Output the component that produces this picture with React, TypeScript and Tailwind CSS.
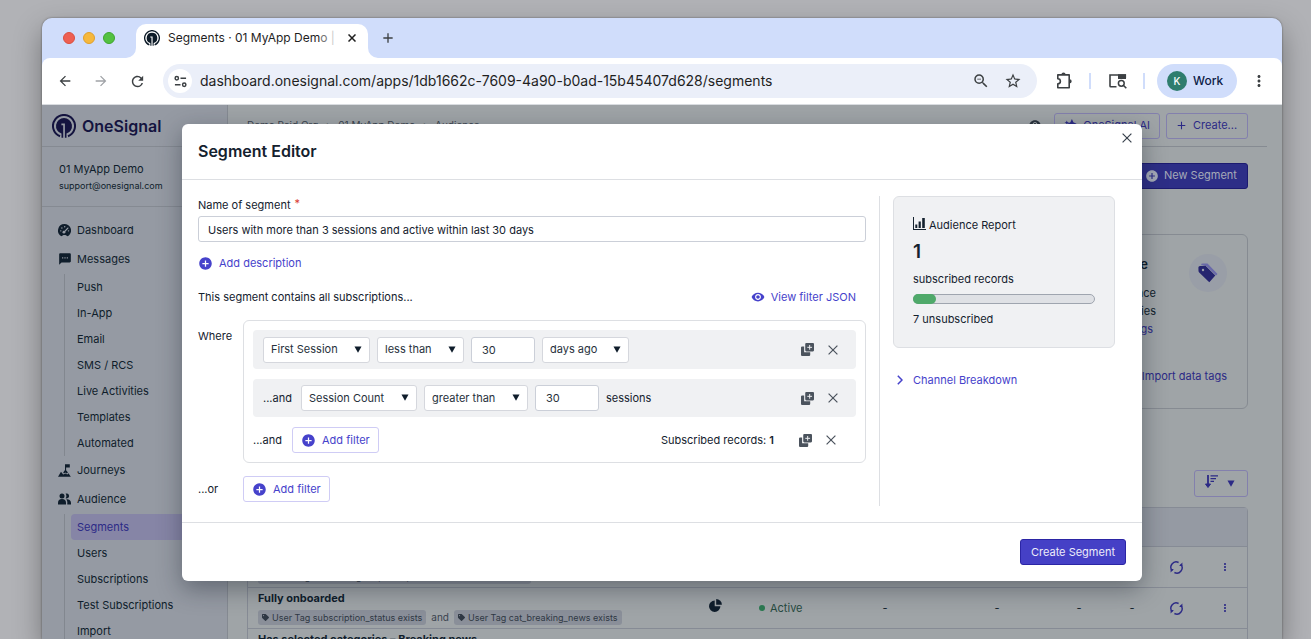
import type { ReactNode } from "react";
import {
  MdAddCircle,
  MdArrowBack,
  MdArrowForward,
  MdMoreVert,
  MdRefresh,
  MdRemoveRedEye,
  MdSms,
  MdStarBorder,
  MdZoomOut,
  MdHelp,
  MdAdd,
} from "react-icons/md";
import { FaTag } from "react-icons/fa";

function Logo({ className }: { className?: string }) {
  return (
    <svg viewBox="0 0 24 24" className={className} fill="none" aria-hidden="true">
      <path d="M8 22.200A11 11 0 1 1 16 22.200" stroke="currentColor" strokeWidth="2" />
      <path
        d="M12 4a8 8 0 0 1 2.500 15.600V23.800H12.900V9.600H9.400v1.700h1.800V23.800H9.500V19.600A8 8 0 0 1 12 4Z"
        fill="currentColor"
      />
    </svg>
  );
}

function Caret({ className }: { className?: string }) {
  return (
    <svg viewBox="0 0 8 7" className={className} fill="currentColor" aria-hidden="true">
      <path d="M.5.5h7L4 6.8z" />
    </svg>
  );
}

function CopyIcon() {
  return (
    <svg viewBox="0 0 12 12" className="size-[13px]" aria-hidden="true">
      <path d="M0 4.2A1 1 0 0 1 1 3.2h1.9v5.4h5.6v2.4a1 1 0 0 1-1 1H1a1 1 0 0 1-1-1z" fill="#4b535d" />
      <rect x="3.9" y="0" width="8.1" height="7.8" rx="1" fill="#4b535d" />
      <path d="M8 1.8v4.4M5.8 4h4.400" stroke="#f0f1f3" strokeWidth="0.9" />
    </svg>
  );
}

function Cross({ className, weight = 1.2 }: { className?: string; weight?: number }) {
  return (
    <svg viewBox="0 0 10 10" className={className} fill="none" stroke="currentColor" strokeWidth={weight} aria-hidden="true">
      <path d="M.6.6l8.800 8.800M9.400.6L.6 9.400" />
    </svg>
  );
}

function GaugeIcon() {
  return (
    <svg viewBox="0 0 14 14" className="size-[13px]" aria-hidden="true">
      <path d="M7 0a7 7 0 0 1 5.6 11.2c-.8 1-1.6 1.600-2.600 2.100-.8-1-1.800-1.500-3-1.500s-2.200.5-3 1.500A7 7 0 0 1 7 0Z" fill="currentColor" />
      <path d="M6.600 8.700l4-4.300" stroke="#969ba4" strokeWidth="1.400" strokeLinecap="round" />
      <circle cx="6.400" cy="8.800" r="1.500" fill="#969ba4" />
      <circle cx="3" cy="7.400" r=".8" fill="#969ba4" />
      <circle cx="4.200" cy="4.300" r=".8" fill="#969ba4" />
      <circle cx="7.200" cy="3" r=".8" fill="#969ba4" />
      <circle cx="11.300" cy="7.400" r=".8" fill="#969ba4" />
    </svg>
  );
}

function JourneyIcon() {
  return (
    <svg viewBox="0 0 13 13" className="size-[13px]" fill="currentColor" aria-hidden="true">
      <path d="M7 .3h4.800v3.300H8.100v2.600L10 8.500l-1.500 1L7.300 8.400 6 9.400l-.8-.8L7 6z" />
      <path d="M3 7.800l2.200 2.800 2.300-1.200 1.800 1.200L10.500 9.200l2.300 3.500H0z" />
    </svg>
  );
}

function PeopleIcon() {
  return (
    <svg viewBox="0 0 13 12" className="h-3 w-[13px]" fill="currentColor" aria-hidden="true">
      <circle cx="4" cy="2.900" r="2.500" />
      <path d="M7.600.6a2.500 2.500 0 1 1 0 4.600 4 4 0 0 0 0-4.600z" />
      <path d="M0 11.500V10a4 4 0 0 1 8 0v1.500z" />
      <path d="M8.300 6.300A3.800 3.800 0 0 1 13 10v1.500H9.300V10a5 5 0 0 0-1-3.700z" />
    </svg>
  );
}

function PieIcon() {
  return (
    <svg viewBox="0 0 13 13" className="size-[13px]" fill="currentColor" aria-hidden="true">
      <path d="M5.700 1.600v5.700h5.700A5.700 5.700 0 1 1 5.700 1.600z" />
      <path d="M7.200.1a5.700 5.700 0 0 1 5.700 5.700H7.200z" />
    </svg>
  );
}

function ReportIcon() {
  return (
    <svg viewBox="0 0 13 13" className="size-[13px]" fill="currentColor" aria-hidden="true">
      <path d="M0 0h1v12h12v1H0z" />
      <path d="M2.300 7.500h2v3.500h-2zM5.600 4.500h2.200V11H5.600zM9.200 1h2.600v10H9.200z" />
    </svg>
  );
}

function SyncIcon() {
  return (
    <svg viewBox="0 0 13 13" className="size-[13px]" fill="none" stroke="currentColor" strokeWidth="1.400" aria-hidden="true">
      <path d="M2.300 9.800A5.300 5.300 0 0 1 8.600 1.500" />
      <path d="M10.700 3.200A5.300 5.300 0 0 1 4.400 11.500" />
      <path d="M12.400 1.600v3.300H9.100zM.6 11.400V8.100h3.300z" fill="currentColor" stroke="none" />
    </svg>
  );
}

function SortIcon() {
  return (
    <svg viewBox="0 0 13 13" className="size-[13px]" fill="none" stroke="currentColor" aria-hidden="true">
      <path d="M3 0v11" strokeWidth="1.800" />
      <path d="M.5 9L3 12.500 5.500 9z" fill="currentColor" />
      <path d="M5.500.8H13M5.500 3.600h5.500M5.500 6.400h3.500" strokeWidth="1.300" />
    </svg>
  );
}

function TagsIcon() {
  return (
    <svg viewBox="0 0 20 20" className="size-5" aria-hidden="true">
      <path d="M3 1.800Q3.200.4 5 .5l4.500.1 10 10.400-1.500 1.600L8.500 2.900z" fill="#6a69a9" />
      <path d="M.4 4.500Q.4 3 2 2.900l5.500-.2 9.800 9.800-6 6.800L1.200 9.500Q.5 8.800.5 8z" fill="#25246f" />
      <circle cx="5" cy="7" r="1.200" fill="#9a9fa8" />
    </svg>
  );
}

function TuneIcon() {
  return (
    <svg viewBox="0 0 14 14" className="size-[13px]" fill="none" stroke="currentColor" strokeWidth="1.600" aria-hidden="true">
      <circle cx="3" cy="3.500" r="1.800" />
      <path d="M7 3.500h6M1 10.500h6" />
      <circle cx="11" cy="10.500" r="1.800" />
    </svg>
  );
}

function PuzzleIcon() {
  return (
    <svg viewBox="0 0 18 18" className="size-[18px]" aria-hidden="true">
      <path
        d="M2.800 2.900h11.400v12.900H2.800v-3.900a2.600 2.600 0 0 0 0-5.200z"
        fill="none"
        stroke="currentColor"
        strokeWidth="1.600"
        strokeLinejoin="round"
      />
      <path d="M6.400 2.600a2.100 2.100 0 0 1 4.200 0zM14.600 7.200a2.100 2.100 0 0 1 0 4.200z" fill="currentColor" />
    </svg>
  );
}

function TabSearchIcon() {
  return (
    <svg viewBox="0 0 18 16" className="h-4 w-[18px]" fill="none" stroke="currentColor" aria-hidden="true">
      <path d="M7.500 13.700H1.800a.8.800 0 0 1-.8-.8V2h15.300v3" strokeWidth="1.600" />
      <path d="M9 1.300h8V6H9z" fill="currentColor" stroke="none" />
      <circle cx="12.300" cy="10.300" r="2.900" strokeWidth="1.500" />
      <path d="M14.300 12.300l3 3" strokeWidth="1.600" />
    </svg>
  );
}

function NavItem({ icon, label }: { icon: ReactNode; label: string }) {
  return (
    <a href="#" className="flex h-7 items-center gap-[6px] pl-4">
      <span className="w-[13px]">{icon}</span>
      {label}
    </a>
  );
}

function SubNav({ items, active }: { items: string[]; active?: string }) {
  return (
    <ul className="-mb-px ml-[22px] border-l border-[#82878f] pl-[6px]">
      {items.map((item) => (
        <li key={item}>
          <a
            href="#"
            className={
              item === active
                ? "flex h-[26px] items-center rounded-l bg-[#8685a6] pl-[6px] text-[#2c2a86]"
                : "flex h-[26px] items-center pl-[6px]"
            }
          >
            {item}
          </a>
        </li>
      ))}
    </ul>
  );
}

function Select({ label, value, className }: { label: string; value: string; className: string }) {
  return (
    <span className={`relative block ${className}`}>
      <select
        aria-label={label}
        defaultValue={value}
        className="block h-[26px] w-full appearance-none rounded-[3px] border border-[#d5d7dd] bg-white pl-[7px] text-[#27313c]"
      >
        <option>{value}</option>
      </select>
      <Caret className="pointer-events-none absolute top-[9px] right-2 h-[7px] w-2 text-[#0f1d2b]" />
    </span>
  );
}

function NumberBox({ label }: { label: string }) {
  return (
    <input
      aria-label={label}
      defaultValue="30"
      className="h-[26px] w-16 rounded-[3px] border border-[#cbcfd8] bg-white pl-[10px] text-[#27313c]"
    />
  );
}

function RowActions() {
  return (
    <span className="ml-auto flex items-center gap-[14px] pr-[13px] text-[#4b535d]">
      <button aria-label="Duplicate">
        <CopyIcon />
      </button>
      <button aria-label="Remove" className="pr-[5px]">
        <Cross className="size-[10px]" />
      </button>
    </span>
  );
}

function AddFilter() {
  return (
    <button className="flex h-[26px] w-[87px] items-center gap-[6px] rounded-[3px] border border-[#cfccf5] bg-white pl-2 text-[#4642cb]">
      <MdAddCircle className="size-[15px]" />
      Add filter
    </button>
  );
}

function Chip({ children }: { children: ReactNode }) {
  return (
    <span className="flex h-[15px] items-center gap-[3px] rounded-[3px] bg-[#8a8f99] px-1 text-[#2f3844]">
      <FaTag className="size-[7px]" />
      {children}
    </span>
  );
}

function SegmentRow({ name, tags, status }: { name: string; tags?: string[]; status?: string }) {
  return (
    <tr className="h-[41px] border-t border-[#868b95] align-middle">
      <td className="pl-[10px]">
        <div className="leading-[17px] font-bold">{name}</div>
        <div className="flex h-[18px] items-center gap-[5px] pt-[3px] text-[9px] leading-[15px]">
          {tags?.map((tag, i) => (
            <span key={tag} className="flex items-center gap-[5px]">
              {i > 0 && <span className="text-[10px] text-[#3a434e]">and</span>}
              <Chip>{tag}</Chip>
            </span>
          ))}
        </div>
      </td>
      <td>
        <span className="flex justify-center pb-1">
          <PieIcon />
        </span>
      </td>
      <td className="pt-px pl-6 text-[#274b41]">
        {status && (
          <span className="flex items-center gap-[5px]">
            <span className="size-[6px] rounded-full bg-[#2c7a52]" />
            {status}
          </span>
        )}
      </td>
      <td className="pt-px text-center">-</td>
      <td className="pt-px text-center">-</td>
      <td className="pt-px text-center">-</td>
      <td className="pt-px text-center">-</td>
      <td className="pt-px text-[#2c2a86]">
        <button aria-label="Refresh" className="mx-auto block">
          <SyncIcon />
        </button>
      </td>
      <td className="pt-px text-[#2c2a86]">
        <button aria-label="More" className="mx-auto block">
          <MdMoreVert className="size-3" />
        </button>
      </td>
    </tr>
  );
}

function BrowserChrome() {
  return (
    <header className="bg-[#d0ddfb]">
      <div className="flex h-10 items-end">
        <div className="flex h-10 w-[94px] items-center gap-2 pl-[21px]">
          <span className="size-3 rounded-full border border-[#d9503f] bg-[#ee5f52]" />
          <span className="size-3 rounded-full border border-[#dfa02c] bg-[#f6b83c]" />
          <span className="size-3 rounded-full border border-[#3fa52e] bg-[#53c140]" />
        </div>
        <div className="relative flex h-[34px] w-[232px] items-center rounded-t-[10px] bg-white pr-3 pb-[6px] pl-2">
          <svg viewBox="0 0 10 10" className="absolute bottom-0 -left-[10px] size-[10px]" fill="#fff" aria-hidden="true">
            <path d="M10 0v10H0A10 10 0 0 0 10 0z" />
          </svg>
          <svg viewBox="0 0 10 10" className="absolute -right-[10px] bottom-0 size-[10px]" fill="#fff" aria-hidden="true">
            <path d="M0 0v10h10A10 10 0 0 1 0 0z" />
          </svg>
          <Logo className="size-4 text-[#0d1b28]" />
          <span className="ml-2 text-[12px] text-[#1f1f1f]">
            Segments · 01 MyApp Dem<span className="text-[#777]">o</span> <span className="text-[#ccc]">|</span>
          </span>
          <button aria-label="Close tab" className="ml-auto text-[#1f1f1f]">
            <Cross className="size-2" weight={1.9} />
          </button>
        </div>
        <button aria-label="New tab" className="mb-3 ml-3 text-[#3c4043]">
          <MdAdd className="size-4" />
        </button>
      </div>
      <div className="flex h-[47px] items-center rounded-t-[8px] border-b border-[#d9dce0] bg-white text-[#3c4043]">
        <nav className="flex w-[121px] items-center gap-5 pl-[15px]">
          <button aria-label="Back">
            <MdArrowBack className="size-4" />
          </button>
          <button aria-label="Forward" className="text-[#a0a3a7]">
            <MdArrowForward className="size-4" />
          </button>
          <button aria-label="Reload">
            <MdRefresh className="size-[17px]" />
          </button>
        </nav>
        <div className="flex h-[34px] min-w-0 flex-1 items-center rounded-full bg-[#ebeff9] pr-[15px] pl-[5px]">
          <span className="flex size-6 items-center justify-center rounded-full bg-white">
            <TuneIcon />
          </span>
          <input
            aria-label="Address"
            defaultValue="dashboard.onesignal.com/apps/1db1662c-7609-4a90-b0ad-15b45407d628/segments"
            className="ml-2 min-w-0 flex-1 bg-transparent pb-[2px] text-[14px] text-[#1f1f1f]"
          />
          <button aria-label="Zoom">
            <MdZoomOut className="size-[18px]" />
          </button>
          <button aria-label="Bookmark" className="ml-[14px]">
            <MdStarBorder className="size-[18px]" />
          </button>
        </div>
        <button aria-label="Extensions" className="ml-[18px]">
          <PuzzleIcon />
        </button>
        <span className="ml-4 h-4 w-[2px] bg-[#d0ddfb]" />
        <button aria-label="Search tabs" className="ml-[18px]">
          <TabSearchIcon />
        </button>
        <span className="ml-4 h-4 w-[2px] bg-[#d0ddfb]" />
        <button className="ml-3 flex h-[34px] w-20 items-center gap-[6px] rounded-full bg-[#d0ddfb] pl-[10px] text-[12px] font-medium text-[#0b1a45]">
          <span className="flex size-5 items-center justify-center rounded-full bg-[#2f7d6e] text-[10px] text-white">K</span>
          Work
        </button>
        <button aria-label="Menu" className="mr-[14px] ml-[13px]">
          <MdMoreVert className="size-[18px]" />
        </button>
      </div>
    </header>
  );
}

function Sidebar() {
  return (
    <aside className="w-[186px] shrink-0 border-r border-[#858a92] bg-[#959aa3]">
      <div className="flex h-[42px] items-center gap-[6px] border-b border-[#858a92] pl-[10px] text-[#14143f]">
        <Logo className="size-6" />
        <span className="text-[16px] font-semibold">OneSignal</span>
      </div>
      <div className="h-[60px] border-b border-[#858a92] pt-[14px] pl-[17px]">
        <div className="leading-[17px]">01 MyApp Demo</div>
        <div className="text-[9px] leading-[16px]">support@onesignal.com</div>
      </div>
      <nav className="flex flex-col gap-px pt-[9px]">
        <NavItem icon={<GaugeIcon />} label="Dashboard" />
        <NavItem icon={<MdSms className="size-[14px]" />} label="Messages" />
        <SubNav
          items={["Push", "In-App", "Email", "SMS / RCS", "Live Activities", "Templates", "Automated"]}
        />
        <NavItem icon={<JourneyIcon />} label="Journeys" />
        <NavItem icon={<PeopleIcon />} label="Audience" />
        <SubNav items={["Segments", "Users", "Subscriptions", "Test Subscriptions", "Import"]} active="Segments" />
      </nav>
    </aside>
  );
}

function SegmentsPage() {
  return (
    <main className="min-w-0 flex-1 bg-[#9fa4a7]">
      <div className="mr-[15px] flex h-[42px] items-center border-b border-[#868b92] pr-[19px] pl-[19px]">
        <nav className="flex gap-2 text-[10px] text-[#3a434e]">
          <span>Demo Paid Org</span>
          <span>›</span>
          <span>01 MyApp Demo</span>
          <span>›</span>
          <span>Audience</span>
        </nav>
        <MdHelp className="ml-auto size-[14px] text-[#2a333d]" />
        <button className="ml-3 flex h-[26px] w-[106px] items-center justify-end gap-[6px] rounded-[3px] border border-[#8380ad] pr-[9px] text-[#2c2a86]">
          <svg viewBox="0 0 14 14" className="size-[13px]" fill="currentColor" aria-hidden="true">
            <path d="M8.500 0l1.600 3.400L13.500 5l-3.400 1.600L8.500 10 6.900 6.600 3.500 5l3.400-1.600zM3 1.500l.7 1.800L5.500 4l-1.800.7L3 6.500l-.7-1.800L.5 4l1.800-.7z" />
          </svg>
          OneSignal AI
        </button>
        <button className="ml-[6px] flex h-[26px] w-[82px] items-center gap-[5px] rounded-[3px] border border-[#8380ad] pl-2 text-[#2c2a86]">
          <MdAdd className="size-[13px]" />
          Create...
        </button>
      </div>
      <div className="pt-4 pr-[34px] pl-[19px]">
        <div className="flex justify-end">
          <button className="flex h-[26px] w-[114px] items-center gap-[5px] rounded-[3px] border border-[#1c1a70] bg-[#2d2e87] pb-px pl-[10px] text-[#a5aab8]">
            <MdAddCircle className="size-[14px]" />
            New Segment
          </button>
        </div>
        <section className="mt-[45px] ml-auto flex h-[175px] w-1/2 flex-col rounded-md border border-[#868b92] pt-[17px] pr-5">
          <div className="flex justify-end gap-[33px]">
            <div className="leading-[18px]">
              <h2 className="mb-2 pr-2 text-right text-[13px] leading-6 font-semibold">Personalize at scale</h2>
              <p className="text-right">Tag your audience</p>
              <p className="text-right">with custom properties</p>
              <a href="#" className="block pr-[3px] text-right text-[#2c2a86]">
                Learn about data tags
              </a>
            </div>
            <span className="mt-[2px] flex size-[38px] items-center justify-center rounded-full bg-[#999ea7]">
              <TagsIcon />
            </span>
          </div>
          <a href="#" className="mt-[30px] block text-right text-[#2c2a86]">
            Import data tags
          </a>
        </section>
        <div className="mt-[61px] flex justify-end">
          <button
            aria-label="Sort"
            className="flex h-[27px] w-[54px] items-center gap-[9px] rounded-[3px] border border-[#8380ad] pl-[10px] text-[#2c2a86]"
          >
            <span className="pb-1">
              <SortIcon />
            </span>
            <Caret className="h-[7px] w-2" />
          </button>
        </div>
        <div className="mt-[10px] rounded-t-[4px] border border-[#868b95]">
          <table className="w-full table-fixed">
            <colgroup>
              <col />
              <col className="w-10" />
              <col className="w-[85px]" />
              <col className="w-[130px]" />
              <col className="w-[94px]" />
              <col className="w-[70px]" />
              <col className="w-9" />
              <col className="w-[53px]" />
              <col className="w-11" />
            </colgroup>
            <thead>
              <tr className="h-[38px] bg-[#959aa3] text-left">
                <th className="pl-[10px] font-medium">Name</th>
                <th />
                <th className="pl-6 font-medium">Status</th>
                <th colSpan={6} />
              </tr>
            </thead>
            <tbody>
              <SegmentRow
                name="Engaged in onboarding"
                tags={["User Tag onboarding_step_completed exists for the account"]}
                status="Active"
              />
              <SegmentRow
                name="Fully onboarded"
                tags={["User Tag subscription_status exists", "User Tag cat_breaking_news exists"]}
                status="Active"
              />
              <SegmentRow name="Has selected categories – Breaking news" />
            </tbody>
          </table>
        </div>
      </div>
    </main>
  );
}

function SegmentEditor() {
  return (
    <div
      role="dialog"
      aria-labelledby="editor-title"
      className="relative w-[960px] rounded-md bg-white text-[#14212e] shadow-[0_8px_24px_rgba(20,28,40,0.4)]"
    >
      <div className="flex h-14 items-center border-b border-[#dddfe3] px-4 pb-[2px]">
        <h1 id="editor-title" className="text-[16px] font-semibold">
          Segment Editor
        </h1>
        <button aria-label="Close" className="absolute top-[9px] right-[10px] text-[#3b444f]">
          <Cross className="size-[10px]" />
        </button>
      </div>
      <div className="flex px-4 py-4">
        <form className="flex-1 pr-[13px]" onSubmit={(e) => e.preventDefault()}>
          <label htmlFor="segment-name" className="flex h-5 items-center gap-1 pb-[2px]">
            Name of segment <span className="mb-1 text-[#d8382f]">*</span>
          </label>
          <input
            id="segment-name"
            defaultValue="Users with more than 3 sessions and active within last 30 days"
            className="block h-[26px] w-full rounded-[3px] border border-[#cbcfd8] px-[9px] pt-[2px]"
          />
          <button className="mt-[13px] flex h-4 items-center gap-[6px] text-[#4642cb]">
            <MdAddCircle className="size-[15px]" />
            Add description
          </button>
          <div className="mt-[18px] flex h-4 items-center justify-between pr-[10px]">
            <span>This segment contains all subscriptions...</span>
            <button className="flex items-center gap-[6px] text-[#4642cb]">
              <MdRemoveRedEye className="size-[14px]" />
              View filter JSON
            </button>
          </div>
          <div className="mt-[15px] flex">
            <span className="w-[45px] pt-2">Where</span>
            <div className="flex flex-1 flex-col gap-[10px] rounded-md border border-[#dddfe3] p-[9px]">
              <div className="flex h-[39px] items-center gap-[7px] rounded bg-[#f0f1f3] pl-[10px]">
                <Select label="Filter" value="First Session" className="w-[107px]" />
                <Select label="Comparison" value="less than" className="w-[87px]" />
                <NumberBox label="Days" />
                <Select label="Unit" value="days ago" className="w-[87px]" />
                <RowActions />
              </div>
              <div className="flex h-[38px] items-center gap-[7px] rounded bg-[#f0f1f3] pl-[10px]">
                <span className="w-[31px]">...and</span>
                <Select label="Filter" value="Session Count" className="w-[116px]" />
                <Select label="Comparison" value="greater than" className="w-[104px]" />
                <NumberBox label="Sessions" />
                <span>sessions</span>
                <RowActions />
              </div>
              <div className="flex items-center pr-[2px]">
                <span className="w-[39px]">...and</span>
                <AddFilter />
                <span className="mr-[25px] ml-auto">
                  Subscribed records: <b className="font-semibold">1</b>
                </span>
                <span>
                  <span className="flex">
                    <RowActions />
                  </span>
                </span>
              </div>
            </div>
          </div>
          <div className="mt-[13px] flex items-center">
            <span className="w-[45px]">...or</span>
            <AddFilter />
          </div>
        </form>
        <aside className="min-h-[310px] border-l border-[#dddfe3] pr-[11px] pl-[13px]">
          <section className="w-[222px] rounded-md border border-[#dddfe3] bg-[#f0f1f3] px-[19px] py-[18px]">
            <h2 className="flex h-5 items-center gap-[3px]">
              <span className="mb-1">
                <ReportIcon />
              </span>
              Audience Report
            </h2>
            <div className="h-[34px] text-[19px] leading-[34px] font-semibold">1</div>
            <div className="leading-5">subscribed records</div>
            <div className="mt-[5px] h-[10px] rounded-full border border-[#9fa5af] bg-[#dfe1e5]">
              <div className="-mt-px -ml-px h-[10px] w-[23px] rounded-full bg-[#4fa96a]" />
            </div>
            <div className="mt-[5px] leading-5">7 unsubscribed</div>
          </section>
          <button className="mt-6 flex items-center gap-[10px] pl-1 text-[#4642cb]">
            <svg viewBox="0 0 6 10" className="h-[10px] w-[6px]" fill="none" stroke="currentColor" strokeWidth="1.500" aria-hidden="true">
              <path d="M.8.7L5 5 .8 9.300" />
            </svg>
            Channel Breakdown
          </button>
        </aside>
      </div>
      <div className="flex justify-end border-t border-[#dddfe3] p-4">
        <button className="h-[26px] rounded-[3px] border border-[#2b25a5] bg-[#4540c6] px-[10px] text-[#edecfa]">
          Create Segment
        </button>
      </div>
    </div>
  );
}

export default function App() {
  return (
    <div className="flex h-screen overflow-hidden bg-[#b1b2b6] pt-[18px] pr-[29px] pl-[42px] font-['Inter',sans-serif] text-[11px] text-[#0f1d2b]">
      <div className="flex min-w-0 flex-1 flex-col overflow-hidden rounded-t-[10px] shadow-[0_0_2px_rgba(0,0,0,0.5),0_12px_28px_rgba(0,0,0,0.35)]">
        <BrowserChrome />
        <div className="relative flex min-h-0 flex-1">
          <div className="flex min-w-0 flex-1 overflow-hidden">
            <Sidebar />
            <SegmentsPage />
          </div>
          <div className="absolute inset-0 flex items-start justify-center pt-[19px]">
            <SegmentEditor />
          </div>
        </div>
      </div>
    </div>
  );
}
